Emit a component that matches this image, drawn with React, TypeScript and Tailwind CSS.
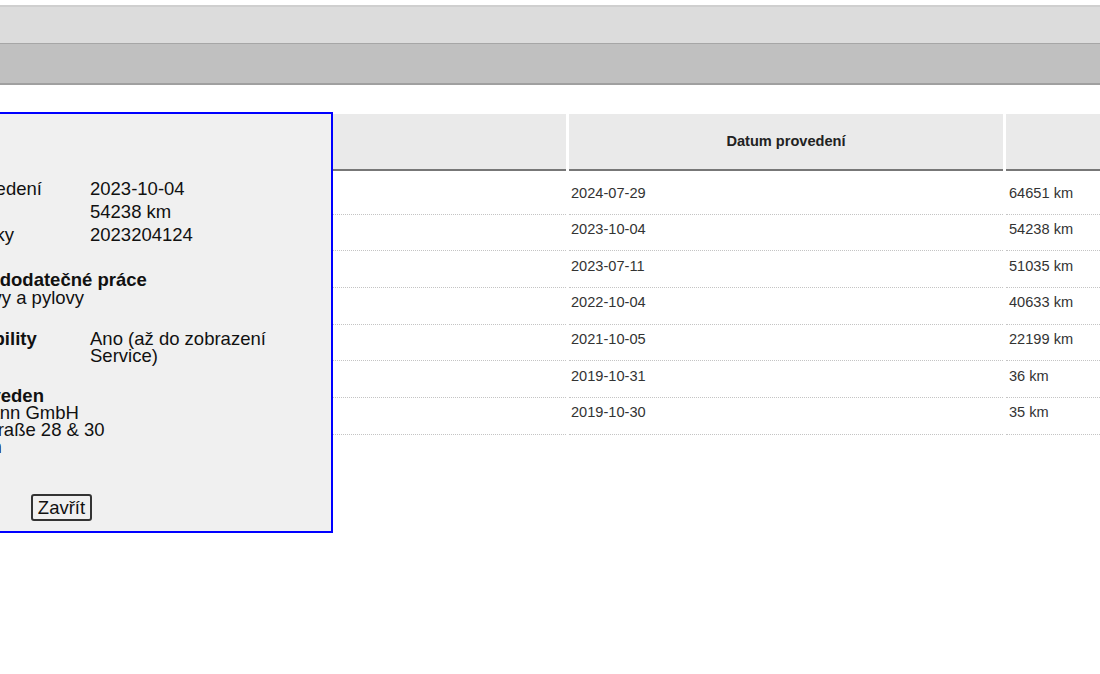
import React from "react";

const rows = [
  { date: "2024-07-29", km: "64651 km" },
  { date: "2023-10-04", km: "54238 km" },
  { date: "2023-07-11", km: "51035 km" },
  { date: "2022-10-04", km: "40633 km" },
  { date: "2021-10-05", km: "22199 km" },
  { date: "2019-10-31", km: "36 km" },
  { date: "2019-10-30", km: "35 km" },
];

// detail dialog rows
const details = [
  { label: "Datum provedení", value: "2023-10-04" },
  { label: "Stav km", value: "54238 km" },
  { label: "Číslo zakázky", value: "2023204124" },
];

export default function App() {
  return (
    <div
      className="relative w-[1100px] h-[674px] overflow-hidden bg-white"
      style={{ fontFamily: '"Liberation Sans", Arial, sans-serif' }}
    >
      {/* toolbars */}
      <div className="h-[5px]" />
      <div className="h-[2px] bg-[#cfcfcf]" />
      <div className="h-[37px] bg-[#dcdcdc] border-b border-[#a6a6a6]" />
      <div className="h-[41px] bg-[#c0c0c0] border-b-2 border-[#a0a0a0]" />

      {/* history table */}
      <div className="mt-[29px] text-[14.6px] text-[#333]">
        <div className="grid grid-cols-[566px_434px_200px] gap-x-[3px]">
          <div className="h-[57px] bg-[#eaeaea] border-b-2 border-[#777]" />
          <div className="h-[57px] bg-[#eaeaea] border-b-2 border-[#777] flex items-center justify-center font-bold text-[#222]">
            Datum provedení
          </div>
          <div className="h-[57px] bg-[#eaeaea] border-b-2 border-[#777]" />
        </div>
        <div className="h-[7px]" />
        {rows.map((r) => (
          <div key={r.date} className="grid grid-cols-[566px_434px_200px] gap-x-[3px]">
            <div className="h-[36.67px] border-b border-dotted border-[#c4c4c4]" />
            <div className="h-[36.67px] border-b border-dotted border-[#c4c4c4] pt-[6.5px] pl-[2px] leading-[17px]">
              {r.date}
            </div>
            <div className="h-[36.67px] border-b border-dotted border-[#c4c4c4] pt-[6.5px] pl-[3px] leading-[17px]">
              {r.km}
            </div>
          </div>
        ))}
      </div>

      {/* detail dialog */}
      <div className="absolute left-[-210px] top-[112px] w-[543px] h-[421px] border-2 border-[#0000ff] bg-[#f0f0f0] text-[18.5px] text-[#111] flex flex-col">
        <div className="pl-[108px] pt-[62.5px]">
          {details.map((d) => (
            <div key={d.label} className="grid grid-cols-[190px_200px] h-[23px] leading-[23px] whitespace-nowrap">
              <span>{d.label}</span>
              <span>{d.value}</span>
            </div>
          ))}

          <div className="mt-[25px] leading-[18px] whitespace-nowrap">
            <div className="font-bold">Provedené dodatečné práce</div>
            <div>Filtr prachovy a pylovy</div>
          </div>

          <div className="mt-[23px] grid grid-cols-[190px_200px] leading-[17px]">
            <span className="font-bold whitespace-nowrap">Záruka mobility</span>
            <span>Ano (až do zobrazení Service)</span>
          </div>

          <div className="mt-[23px] leading-[17px] whitespace-nowrap">
            <div className="font-bold">Servis proveden</div>
            <div>Auto Lehmann GmbH</div>
            <div>Leipziger Straße 28 &amp; 30</div>
            <div>Sindelfingen</div>
          </div>
        </div>

        <div className="flex justify-center mt-[39.5px]">
          <button className="h-[27px] px-[5px] border-2 border-[#333] rounded-[3px] bg-[#f0f0f0] leading-[22px] text-[18.5px] text-[#111]">
            Zavřít
          </button>
        </div>
      </div>
    </div>
  );
}
